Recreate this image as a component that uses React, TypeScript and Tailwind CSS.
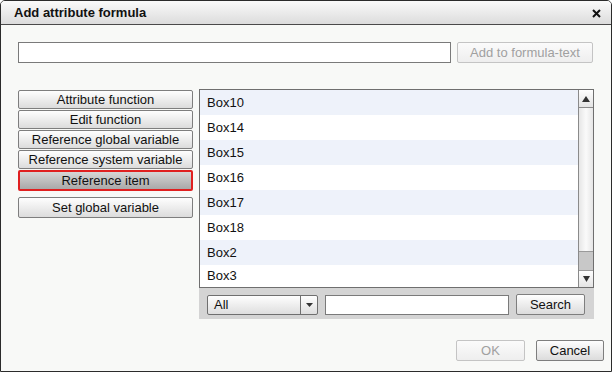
import {useState} from "react";

const items = ["Box10", "Box14", "Box15", "Box16", "Box17", "Box18", "Box2", "Box3"];

const sideButtons = [
    "Attribute function",
    "Edit function",
    "Reference global variable",
    "Reference system variable",
];

function Btn({label, className = "", disabled = false}: { label: string; className?: string; disabled?: boolean }) {
    return (
        <button
            className={`flex items-center justify-center rounded-[2px] border text-[13px] leading-none ${disabled
                ? "border-[#c4c4c4] bg-gradient-to-b from-[#fbfbfb] to-[#eeeeee] text-[#a0a0a0]"
                : "border-[#7e7e7e] bg-gradient-to-b from-[#fefefe] to-[#dcdcdc] text-[#111]"} ${className}`}
        >
            {label}
        </button>
    );
}

export default function App() {
    const [selected] = useState("Reference item");

    return (
        <div
            className="w-[612px] h-[372px] flex flex-col border border-[#2b2b2b] rounded-t-[5px] bg-[#f8f9f7] overflow-hidden"
            style={{fontFamily: '"Liberation Sans", Arial, sans-serif'}}>

            {/* Title */}
            <div
                className="h-[24px] flex-shrink-0 flex items-center justify-between pl-[13px] pr-[10px] pt-[1px] border-b border-[#4a4a4a] bg-gradient-to-b from-[#fafafa] to-[#dcdcdc]">
                <span className="text-[13px] font-bold text-[#111]">Add attribute formula</span>
                <svg width="9" height="9" viewBox="0 0 9 9">
                    <path d="M1 1 L8 8 M8 1 L1 8" stroke="#111" strokeWidth="2"/>
                </svg>
            </div>

            {/* Formula row */}
            <div className="flex items-center pl-[17px] pt-[17px] gap-[6px]">
                <input className="w-[433px] h-[21px] border border-[#7a7a7a] bg-white outline-none"/>
                <Btn label="Add to formula-text" disabled className="w-[136px] h-[21px]"/>
            </div>

            {/* Main */}
            <div className="flex pl-[17px] pt-[27px] gap-[6px]">
                <div className="w-[175px] flex flex-col">
                    {sideButtons.map((b) => (
                        <Btn key={b} label={b} className="h-[19px] mb-[1px] w-full"/>
                    ))}
                    <button
                        className={`h-[21px] w-full flex items-center justify-center text-[13px] leading-none rounded-[2px] border-2 ${selected === "Reference item" ? "border-[#e02020] bg-gradient-to-b from-[#d6d6d6] to-[#a9a9a9]" : "border-[#7e7e7e]"} text-[#111]`}>
                        Reference item
                    </button>
                    <Btn label="Set global variable" className="h-[21px] mt-[6px] w-full"/>
                </div>

                <div className="w-[395px] -mt-[1px] flex flex-col">
                    <div className="h-[199px] flex border border-[#6f6f6f] bg-white">
                        <div className="flex-1 h-full overflow-hidden">
                            {items.map((it, i) => (
                                <div key={it}
                                     className={`${i === items.length - 1 ? "h-[22px]" : "h-[25px]"} flex items-center pl-[7px] text-[13px] text-[#111] ${i % 2 === 0 ? "bg-[#eef2fa]" : "bg-white"}`}>
                                    {it}
                                </div>
                            ))}
                        </div>
                        {/* Scrollbar */}
                        <div className="w-[15px] h-full flex flex-col border-l border-[#8a8a8a] bg-gradient-to-r from-[#e6e6e6] via-[#fafafa] to-[#e6e6e6]">
                            <div className="h-[18px] flex items-center justify-center border-b border-[#8a8a8a] bg-gradient-to-b from-[#fefefe] to-[#e4e4e4]">
                                <svg width="8" height="6" viewBox="0 0 8 6"><path d="M4 0 L8 6 L0 6 Z" fill="#333"/></svg>
                            </div>
                            <div className="flex-1"/>
                            <div className="h-[20px] bg-[#c8c8c8] border-t border-b border-[#9a9a9a]"/>
                            <div className="h-[16px] flex items-center justify-center bg-gradient-to-b from-[#fefefe] to-[#e4e4e4]">
                                <svg width="7" height="6" viewBox="0 0 7 6"><path d="M0 0 L7 0 L3.5 6 Z" fill="#333"/></svg>
                            </div>
                        </div>
                    </div>

                    {/* Filter bar */}
                    <div className="h-[31px] flex items-start pt-[7px] pl-[8px] bg-[#d4d4d4]">
                        <div className="w-[111px] h-[20px] flex border border-[#6f6f6f] rounded-[2px] bg-gradient-to-b from-[#fefefe] to-[#dedede]">
                            <span className="flex-1 flex items-center pl-[6px] text-[13px] text-[#111]">All</span>
                            <span className="w-[17px] flex items-center justify-center border-l border-[#6f6f6f]">
                                <svg width="7" height="4" viewBox="0 0 7 4"><path d="M0 0 L7 0 L3.5 4 Z" fill="#333"/></svg>
                            </span>
                        </div>
                        <input className="ml-[7px] w-[184px] h-[20px] border border-[#7a7a7a] bg-white outline-none"/>
                        <Btn label="Search" className="ml-[7px] -mt-[1px] w-[69px] h-[21px]"/>
                    </div>
                </div>
            </div>

            {/* Footer */}
            <div className="mt-auto flex justify-end gap-[11px] pr-[7px] pb-[10px]">
                <Btn label="OK" disabled className="w-[69px] h-[21px]"/>
                <Btn label="Cancel" className="w-[68px] h-[21px]"/>
            </div>
        </div>
    );
}
